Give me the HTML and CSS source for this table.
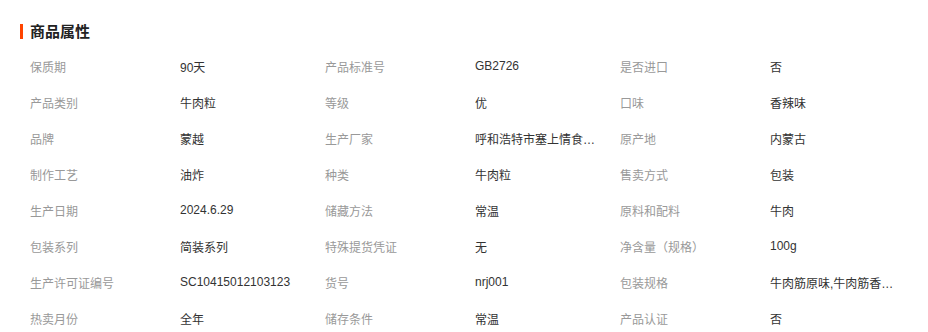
FILE: index.html
```html
<!DOCTYPE html>
<html lang="zh-CN">
<head>
<meta charset="utf-8">
<link rel="stylesheet" href="styles.css">
</head>
<body>
<div class="attrs">
  <h2 class="attrs-title">商品属性</h2>
  <div class="attrs-grid">
    <span class="k">保质期</span><span class="v">90天</span>
    <span class="k">产品标准号</span><span class="v">GB2726</span>
    <span class="k">是否进口</span><span class="v">否</span>

    <span class="k">产品类别</span><span class="v">牛肉粒</span>
    <span class="k">等级</span><span class="v">优</span>
    <span class="k">口味</span><span class="v">香辣味</span>

    <span class="k">品牌</span><span class="v">蒙越</span>
    <span class="k">生产厂家</span><span class="v">呼和浩特市塞上情食品有限公司</span>
    <span class="k">原产地</span><span class="v">内蒙古</span>

    <span class="k">制作工艺</span><span class="v">油炸</span>
    <span class="k">种类</span><span class="v">牛肉粒</span>
    <span class="k">售卖方式</span><span class="v">包装</span>

    <span class="k">生产日期</span><span class="v">2024.6.29</span>
    <span class="k">储藏方法</span><span class="v">常温</span>
    <span class="k">原料和配料</span><span class="v">牛肉</span>

    <span class="k">包装系列</span><span class="v">简装系列</span>
    <span class="k">特殊提货凭证</span><span class="v">无</span>
    <span class="k">净含量（规格）</span><span class="v">100g</span>

    <span class="k">生产许可证编号</span><span class="v">SC10415012103123</span>
    <span class="k">货号</span><span class="v">nrj001</span>
    <span class="k">包装规格</span><span class="v">牛肉筋原味,牛肉筋香辣味</span>

    <span class="k">热卖月份</span><span class="v">全年</span>
    <span class="k">储存条件</span><span class="v">常温</span>
    <span class="k">产品认证</span><span class="v">否</span>
  </div>
</div>
</body>
</html>
```
FILE: styles.css
```css
html, body {
  margin: 0;
  padding: 0;
  background: #fff;
}
body {
  font-family: "Liberation Sans", "Noto Sans CJK SC", sans-serif;
  font-size: 12px;
  color: #333;
}
.attrs {
  padding: 24px 0 0 20px;
}
.attrs-title {
  margin: 0;
  border-left: 3px solid #ff4400;
  padding-left: 7px;
  font-size: 15px;
  font-weight: bold;
  line-height: 15px;
  height: 15px;
  color: #222;
}
.attrs-grid {
  margin-top: 9px;
  padding-left: 10px;
  display: grid;
  grid-template-columns: repeat(3, 150px 145px);
  grid-auto-rows: 36px;
  align-items: center;
}
.k {
  color: #999;
  white-space: nowrap;
}
.v {
  color: #333;
  max-width: 124px;
  white-space: nowrap;
  overflow: hidden;
  text-overflow: ellipsis;
}
```
